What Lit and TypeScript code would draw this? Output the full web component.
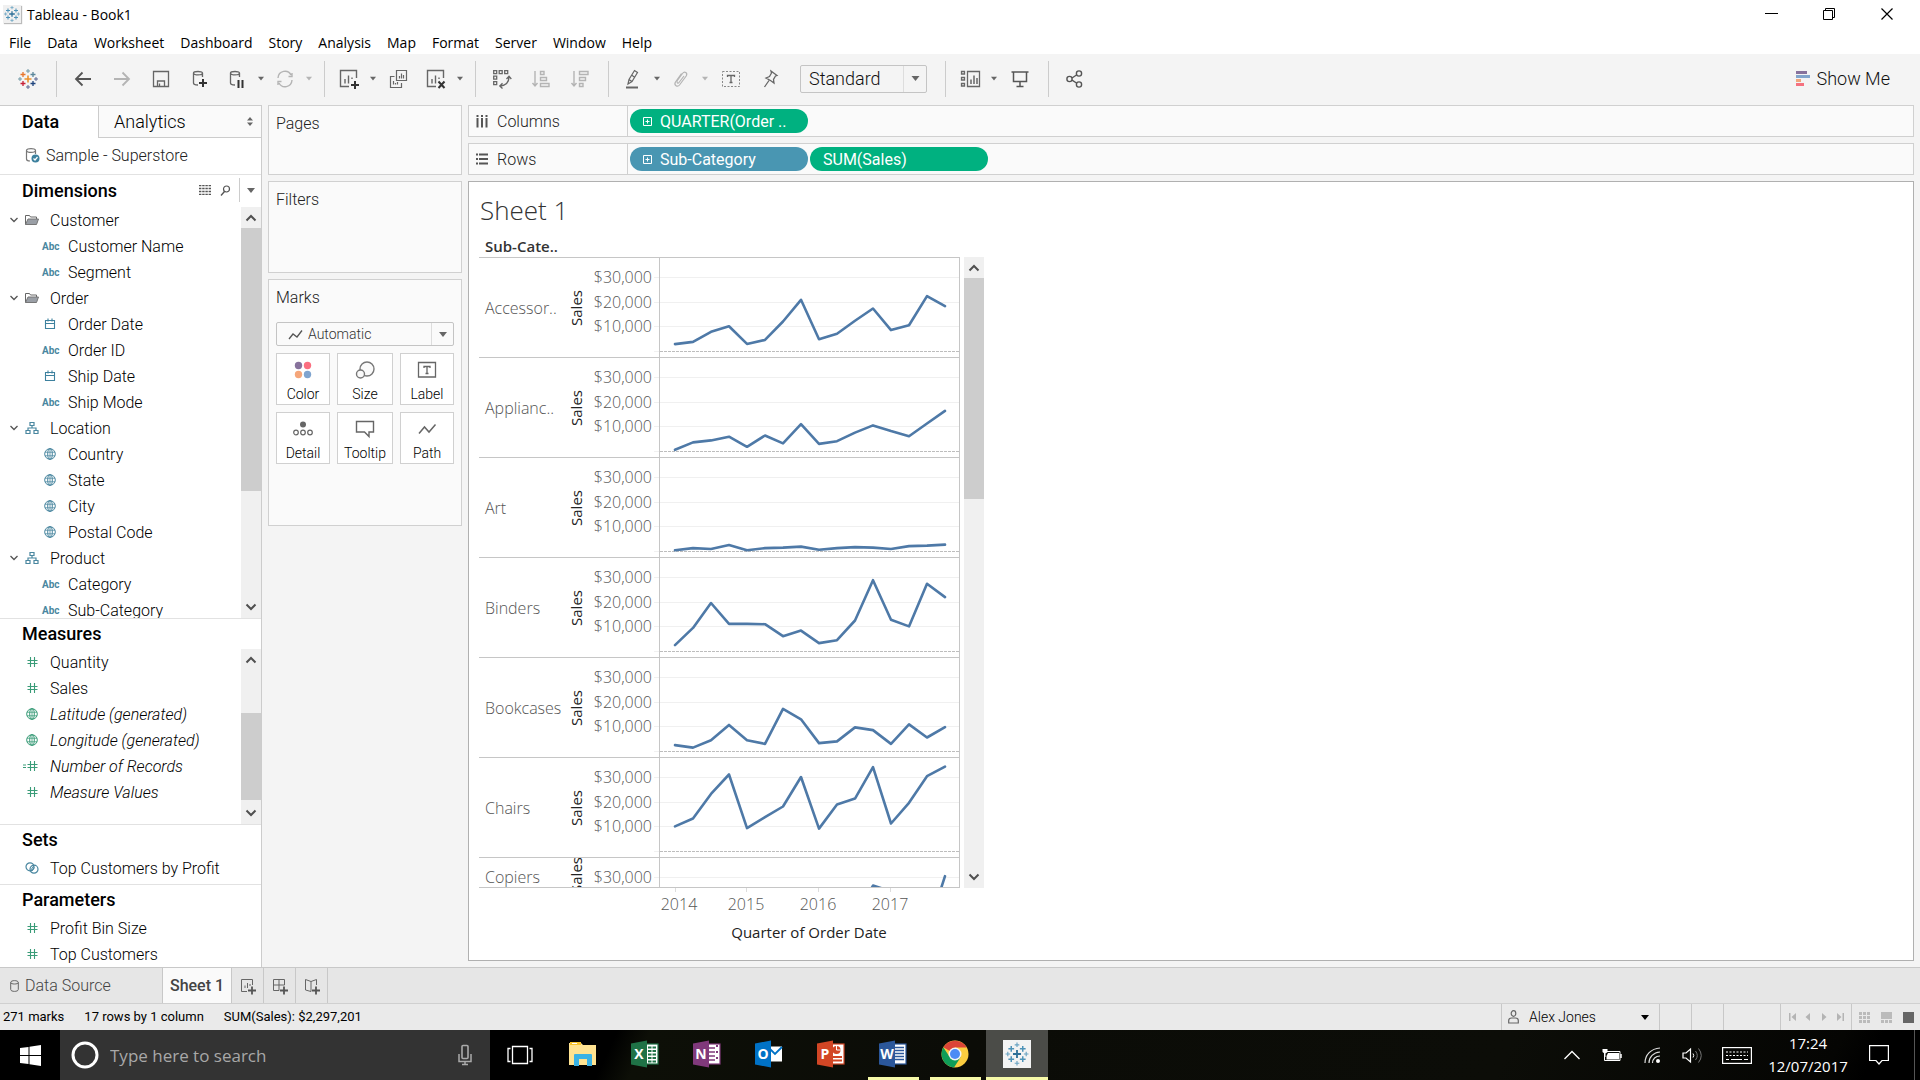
import { LitElement, html, svg, css, nothing, type TemplateResult, type SVGTemplateResult } from "lit";
import { customElement, property } from "lit/decorators.js";
import { classMap } from "lit/directives/class-map.js";
import { styleMap } from "lit/directives/style-map.js";

type Glyph = SVGTemplateResult;

const draw = (glyph: Glyph, w = 20, h = w): TemplateResult =>
  html`<svg class="glyph" width=${w} height=${h} viewBox="0 0 ${w} ${h}" aria-hidden="true">${glyph}</svg>`;

const cross = (x: number, y: number, r: number, color: string, w = 1): Glyph =>
  svg`<path d="M${x - r} ${y}H${x + r}M${x} ${y - r}V${y + r}" stroke=${color} stroke-width=${w} fill="none"/>`;

/* Nine-cross brand mark; colours run centre, diagonals, then outer points. */
const brand = (c: string[]): Glyph => svg`
  ${cross(10, 10, 3.5, c[0], 1.6)}
  ${cross(5, 5.5, 2.5, c[1], 1.3)}${cross(15, 5.5, 2.5, c[2], 1.3)}
  ${cross(5, 14.5, 2.5, c[3], 1.3)}${cross(15, 14.5, 2.5, c[4], 1.3)}
  ${cross(10, 2, 2, c[5])}${cross(2, 10, 2, c[5])}${cross(18, 10, 2, c[6])}${cross(10, 18, 2, c[6])}`;
const BLUE_MARK = ["#2f7098", "#4e93b8", "#4e93b8", "#4e93b8", "#4e93b8", "#6aa3c2", "#6aa3c2"];

const plus = (x: number, y: number): Glyph =>
  svg`<path d="M${x - 4} ${y}H${x + 4}M${x} ${y - 4}V${y + 4}" stroke="#333" stroke-width="2" fill="none"/>`;
const cylinder = svg`<path d="M12.5 8V4C12.5 2 3.5 2 3.5 4V14C3.5 15.3 5 16 8 16M3.5 4C3.5 6.5 12.5 6.5 12.5 4" fill="none" stroke="#666" stroke-width="1.3"/>`;
const sheetBox = svg`<path d="M17.5 9V1.5H1.5V17.5H10M6 14.5V10M9.5 14.5V6.5M13 10V8.5" fill="none" stroke="#666" stroke-width="1.4"/>`;

const icons: Record<string, Glyph> = {
  brand: brand(["#eb912c", "#e8762d", "#5b879b", "#c72037", "#1f447e", "#7199a6", "#5c6692"]),
  back: svg`<path d="M18 10H3M9.5 3.5L3 10L9.5 16.5" fill="none" stroke="#555" stroke-width="1.8"/>`,
  forward: svg`<path d="M2 10H17M10.5 3.5L17 10L10.5 16.5" fill="none" stroke="#b4b4b4" stroke-width="1.8"/>`,
  save: svg`<path d="M2.5 2.5H17.5V17.5H2.5ZM6.5 17V12H13.5V17M8.5 17V14.5" fill="none" stroke="#666" stroke-width="1.3"/>`,
  addData: svg`${cylinder}${plus(13, 14)}`,
  pauseData: svg`${cylinder}<path d="M11.5 11V19M15.5 11V19" stroke="#333" stroke-width="2"/>`,
  refresh: svg`<path d="M3 9C3.5 1.5 13 0 16 6M17 4V7.5H13.5M17 11C16.5 18.5 7 20 4 14M3 16V12.5H6.5" fill="none" stroke="#b4b4b4" stroke-width="1.4"/>`,
  newSheet: svg`${sheetBox}${plus(16, 16)}`,
  copySheet: svg`<path d="M7.5 1.5H17.5V11.5H7.5ZM5.5 7.5H1.5V18.5H12.5V14M10.5 9.5V7M12.5 9.5V4.5M14.5 9.5V6M4.5 15.5V12M6.5 15.5V14M8.5 15.5V13" fill="none" stroke="#666" stroke-width="1.2"/>`,
  clearSheet: svg`${sheetBox}<path d="M12.5 12.5L18.5 19M18.5 12.5L12.5 19" stroke="#333" stroke-width="2"/>`,
  swap: svg`<path d="M1.7 1.7H4.7V4.7H1.7ZM7.2 1.7H10.2V4.7H7.2ZM12.7 1.7H15.7V4.7H12.7ZM1.7 7.2H4.7V10.2H1.7ZM1.7 12.7H4.7V15.7H1.7ZM17 7.5C17 13 14 16.5 8 17M14.5 10L17 7.2L19.3 10M10.5 14.3L7.8 17L10.5 19.5" fill="none" stroke="#666" stroke-width="1.3"/>`,
  sortAsc: svg`<path d="M4 2V17M1.5 14L4 17L6.5 14M9.5 2.5H13V5.5H9.5ZM9.5 8.5H15.5V11.5H9.5ZM9.5 14.5H18V17.5H9.5Z" fill="none" stroke="#b4b4b4" stroke-width="1.4"/>`,
  sortDesc: svg`<path d="M4 2V17M1.5 14L4 17L6.5 14M9.5 2.5H18V5.5H9.5ZM9.5 8.5H15.5V11.5H9.5ZM9.5 14.5H13V17.5H9.5Z" fill="none" stroke="#b4b4b4" stroke-width="1.4"/>`,
  highlight: svg`<path d="M5 15L6 10.5L11.5 1.5L14.5 3.5L9 12.5ZM6 10.5L9 12.5M8.5 6L12 8.5" fill="none" stroke="#666" stroke-width="1.2"/><path d="M3 18.5H15" stroke="#666" stroke-width="2"/>`,
  clip: svg`<path d="M6 12L11.5 4.5C13.5 1.8 17 4 15.2 7L8.5 16C6.5 18.5 2.5 16.3 4.5 13L10.5 4.5M13 7L8 13.5C7 14.8 5.5 13.7 6.3 12.3" fill="none" stroke="#b4b4b4" stroke-width="1.2"/>`,
  label: svg`<rect x="1.5" y="2.5" width="17" height="15" fill="none" stroke="#888" stroke-dasharray="2 1.5"/><path d="M6.5 8V6.5H13.5V8M10 6.5V13.5M8.5 13.5H11.5" fill="none" stroke="#666" stroke-width="1.3"/>`,
  pin: svg`<path d="M11 2L17 6.5L15.5 7L13.5 10.5L14 14L10.5 11.5L6 9L9.5 7.5L11.5 4ZM9 11.5L4.5 18" fill="none" stroke="#666" stroke-width="1.3"/>`,
  cards: svg`<path d="M1.5 2.5H4.5V5H1.5ZM1.5 8.5H4.5V11H1.5ZM1.5 14.5H4.5V17H1.5ZM7.5 2.5H19.5V17.5H7.5Z" fill="none" stroke="#666" stroke-width="1.3"/><path d="M11 15V10.5M14 15V6.5M17 15V9" stroke="#666" stroke-width="1.5"/>`,
  present: svg`<path d="M1.5 3H18.5M3.5 3V12.5H16.5V3M10 12.5V17M6.5 17.5H13.5" fill="none" stroke="#555" stroke-width="1.5"/>`,
  share: svg`<g fill="none" stroke="#555" stroke-width="1.4"><circle cx="4.5" cy="10" r="2.6"/><circle cx="14" cy="4.5" r="2.6"/><circle cx="14" cy="15.5" r="2.6"/><path d="M7 9L11.5 6M7 11.2L11.5 14"/></g>`,
  folder: svg`<path d="M.5 11.5V2.500H4.5L5.500 4H11.5V6" fill="none" stroke="#666"/><path d="M.5 11.5L3 6H13.5L11.5 11.5Z" fill="#9a9fa6" stroke="#777"/>`,
  hierarchy: svg`<path d="M5 1.5H9V4.5H5ZM1 9.5H5V12.5H1ZM9 9.5H13V12.5H9ZM7 4.5V7M3 9.5V7H11V9.5" fill="none" stroke="#4a87a0" stroke-width="1.2"/>`,
  calendar: svg`<path d="M2.5 3.5H11.5V11.5H2.5ZM2.5 6.5H11.5M5 1.5V4.5M9 1.5V4.5" fill="none" stroke="#3d819e" stroke-width="1.1"/>`,
  globe: svg`<g fill="none" stroke="currentColor"><circle cx="7" cy="7" r="5.3"/><ellipse cx="7" cy="7" rx="2.3" ry="5.3"/><path d="M2 5.2H12M2 8.8H12M7 1.5V12.5" stroke-width="0.8"/></g>`,
  hash: svg`<path d="M5.5 2V12M9.5 2V12M2.5 5.5H12.5M2.5 8.5H12.5" stroke="#3a9c78" stroke-width="1.1"/>`,
  sets: svg`<g fill="none" stroke="#4a87a0" stroke-width="1.2"><circle cx="5" cy="5.8" r="4"/><circle cx="9" cy="8.2" r="4"/></g><path d="M5.5 9.5L9 4.5M7 10L9.5 6.5" stroke="#4a87a0"/>`,
};
icons.calcHash = svg`${icons.hash}<path d="M-2 6H1M-2 8.5H1" stroke="#3a9c78"/>`;

const caret = (w = 8, color = "#666") =>
  html`<svg class="caret" width=${w} height="5" viewBox="0 0 8 5" aria-hidden="true"><path d="M0 0H8L4 5Z" fill=${color} /></svg>`;

const reset = css`
  *, *::before, *::after { box-sizing: border-box; }
  button, select, input { font: inherit; color: inherit; border: 0; background: none; padding: 0; margin: 0; border-radius: 0; appearance: none; outline: none; }
  button { display: flex; align-items: center; justify-content: center; white-space: nowrap; }
  ul { list-style: none; margin: 0; padding: 0; }
  h1, h2 { margin: 0; font-size: inherit; font-weight: inherit; }
  svg { display: block; flex: none; }
  .glyph { overflow: visible; }
`;

@customElement("scroll-bar")
class ScrollBar extends LitElement {
  @property({ type: Number }) before = 0;
  @property({ type: Number }) thumb = 1;
  @property({ type: Number }) after = 1;
  static styles = [reset, css`
    :host { display: flex; flex-direction: column; width: 20px; flex: none; background: #f0f0f0; }
    .arrow { height: 21px; flex: none; }
    .arrow.down { height: 23px; }
    .thumb { background: #cdcdcd; }
  `];
  private arrow(name: string, d: string, down = false) {
    return html`<button class=${classMap({ arrow: true, down })} aria-label=${name}>
      <svg width="12" height="8" viewBox="0 0 12 8"><path d=${d} fill="none" stroke="#505050" stroke-width="2" /></svg>
    </button>`;
  }
  render() {
    return html`${this.arrow("Scroll up", "M1.5 6.5L6 2L10.5 6.5")}
      <div style=${styleMap({ flex: `${this.before} 0 0` })}></div>
      <div class="thumb" style=${styleMap({ flex: `${this.thumb} 0 0` })}></div>
      <div style=${styleMap({ flex: `${this.after} 0 0` })}></div>
      ${this.arrow("Scroll down", "M1.5 1.5L6 6L10.5 1.5", true)}`;
  }
}

@customElement("tool-bar")
class ToolBar extends LitElement {
  static styles = [reset, css`
    :host { display: flex; align-items: center; height: 51px; padding-bottom: 2px; box-sizing: border-box; background: #f4f4f4; font-size: 18px; font-weight: 300; color: #111; }
    .tool { width: 39px; height: 34px; }
    .tool.split { width: 36px; }
    .tool.first { width: 56px; }
    .drop { width: 12px; height: 34px; }
    .group { display: flex; align-items: center; height: 36px; padding: 0 9px 0 6px; border-left: 1px solid #ccc; }
    .group.wide { padding-right: 18px; }
    .fit { display: flex; align-items: center; width: 127px; height: 28px; margin-left: 11px; border: 1px solid #c4c4c4; border-radius: 2px; }
    .fit select { flex: 1; min-width: 0; padding-left: 8px; height: 26px; }
    .fit .end { width: 23px; height: 26px; display: grid; place-items: center; border-left: 1px solid #ddd; }
    .show { margin-left: auto; padding-right: 30px; gap: 7px; }
  `];
  private tool(name: string, label: string, split = false, faded = false) {
    return html`<button class=${classMap({ tool: true, split })} aria-label=${label}>${draw(icons[name])}</button>
      ${split ? html`<button class="drop" aria-label="${label} options">${caret(6, faded ? "#b4b4b4" : "#666")}</button>` : nothing}`;
  }
  render() {
    return html`
      <button class="tool first" aria-label="Start page">${draw(icons.brand)}</button>
      <div class="group">
        ${this.tool("back", "Undo")}${this.tool("forward", "Redo")}${this.tool("save", "Save")}
        ${this.tool("addData", "New data source")}${this.tool("pauseData", "Pause updates", true)}
        ${this.tool("refresh", "Run update", true, true)}
      </div>
      <div class="group">
        ${this.tool("newSheet", "New worksheet", true)}${this.tool("copySheet", "Duplicate")}${this.tool("clearSheet", "Clear", true)}
      </div>
      <div class="group">
        ${this.tool("swap", "Swap rows and columns")}${this.tool("sortAsc", "Sort ascending")}${this.tool("sortDesc", "Sort descending")}
      </div>
      <div class="group wide">
        ${this.tool("highlight", "Highlight", true)}${this.tool("clip", "Group members", true, true)}
        ${this.tool("label", "Show mark labels")}${this.tool("pin", "Fix axes")}
        <div class="fit">
          <select aria-label="Fit"><option>Standard</option></select>
          <span class="end">${caret(9)}</span>
        </div>
      </div>
      <div class="group">${this.tool("cards", "Show or hide cards", true)}${this.tool("present", "Presentation mode")}</div>
      <div class="group">${this.tool("share", "Share workbook")}</div>
      <button class="show">
        <svg width="14" height="16" viewBox="0 0 14 16" aria-hidden="true">
          <path d="M0 0H11V3H0Z" fill="#87729c" /><path d="M0 4H14V7H0Z" fill="#82a5cc" />
          <path d="M0 8H5V11H0Z" fill="#f0a67c" /><path d="M0 12H8V15H0Z" fill="#f5717f" />
        </svg>
        Show Me
      </button>`;
  }
}

interface Field { name: string; icon: string; child?: boolean; folder?: boolean; calc?: boolean }
const f = (icon: string, name: string): Field => ({ icon, name, child: true });
const dimensions: Field[] = [
  { icon: "folder", name: "Customer", folder: true }, f("abc", "Customer Name"), f("abc", "Segment"),
  { icon: "folder", name: "Order", folder: true }, f("calendar", "Order Date"), f("abc", "Order ID"), f("calendar", "Ship Date"), f("abc", "Ship Mode"),
  { icon: "hierarchy", name: "Location", folder: true }, f("globe", "Country"), f("globe", "State"), f("globe", "City"), f("globe", "Postal Code"),
  { icon: "hierarchy", name: "Product", folder: true }, f("abc", "Category"), f("abc", "Sub-Category"),
];
const measures: Field[] = [
  { icon: "hash", name: "Quantity" }, { icon: "hash", name: "Sales" },
  { icon: "globe", name: "Latitude (generated)", calc: true }, { icon: "globe", name: "Longitude (generated)", calc: true },
  { icon: "calcHash", name: "Number of Records", calc: true }, { icon: "hash", name: "Measure Values", calc: true },
];

@customElement("data-pane")
class DataPane extends LitElement {
  static styles = [reset, css`
    :host { display: flex; flex-direction: column; width: 262px; min-height: 0; box-sizing: border-box; background: #fff; border-right: 1px solid #ccc; border-top: 1px solid #ccc; font-size: 16px; font-weight: 300; color: #000; }
    .tabs { display: flex; height: 32px; flex: none; font-size: 18px; }
    .tab { justify-content: flex-start; }
    .tab.on { width: 98px; padding: 0 0 2px 22px; font-weight: 500; }
    .tab.off { flex: 1; padding: 0 8px 0 15px; justify-content: space-between; background: #fafafa; border-left: 1px solid #ccc; border-bottom: 1px solid #ccc; }
    .source { display: flex; align-items: center; gap: 6px; height: 37px; flex: none; padding: 0 0 2px 25px; color: #222; border-bottom: 1px solid #e2e2e2; }
    .head { display: flex; align-items: center; height: 32px; flex: none; padding: 0 0 2px 22px; }
    .head h2 { flex: 1; font-size: 18px; font-weight: 500; }
    .head.low { height: 30px; }
    .head .tool { width: 20px; height: 24px; }
    .head .more { width: 22px; height: 24px; margin-left: 4px; border-left: 1px solid #ccc; }
    .list { display: flex; min-height: 0; border-bottom: 1px solid #e2e2e2; }
    .list.grow { flex: 1; }
    .list.mid { flex: 0 0 176px; }
    .list.short { flex: none; padding-bottom: 3px; }
    .list:last-child { border-bottom: 0; }
    ul { flex: 1; min-width: 0; overflow: hidden; }
    .field { display: flex; align-items: center; height: 26px; padding-left: 24px; white-space: nowrap; color: #3a9c78; }
    .field.folder { padding-left: 9px; }
    .field.child { padding-left: 42px; color: #4a87a0; }
    .twist { width: 10px; margin-right: 5px; }
    .kind { width: 16px; display: grid; place-items: center; margin-right: 10px; }
    .abc { font-size: 10px; font-weight: 700; }
    .name { color: #000; }
    .calc .name { font-style: italic; }
  `];
  private field(x: Field) {
    return html`<li class=${classMap({ field: true, folder: !!x.folder, child: !!x.child, calc: !!x.calc })}>
      ${x.folder ? html`<svg class="twist" width="10" height="6" viewBox="0 0 10 6"><path d="M1.5 1L5 4.500L8.5 1" fill="none" stroke="#555" stroke-width="1.3" /></svg>` : nothing}
      <span class="kind">${x.icon === "abc" ? html`<span class="abc">Abc</span>` : draw(icons[x.icon], 14)}</span>
      <span class="name">${x.name}</span>
    </li>`;
  }
  render() {
    return html`
      <div class="tabs" role="tablist">
        <button class="tab on" role="tab" aria-selected="true">Data</button>
        <button class="tab off" role="tab" aria-selected="false">Analytics
          <svg width="6" height="9" viewBox="0 0 6 9"><path d="M0 3.5L3 0L6 3.5ZM0 5.5L3 9L6 5.5Z" fill="#666" /></svg>
        </button>
      </div>
      <div class="source">
        <svg width="15" height="16" viewBox="0 0 15 16"><path d="M10.5 7V3.5C10.5 1 1.5 1 1.5 3.5V12C1.5 13.5 3 14 5 14M1.5 3.5C1.5 6 10.5 6 10.5 3.5" fill="none" stroke="#777" stroke-width="1.2" /><circle cx="10.5" cy="11.5" r="4" fill="#3d819e" /><path d="M8.5 11.5L10 13L12.5 10" fill="none" stroke="#fff" stroke-width="1.2" /></svg>
        Sample - Superstore
      </div>
      <div class="head">
        <h2>Dimensions</h2>
        <button class="tool" aria-label="View data"><svg width="12" height="10" viewBox="0 0 12 10"><path d="M0 .5H12M0 3.5H12M0 6.5H12M0 9.5H12" stroke="#555" stroke-width="1.400" stroke-dasharray="2.400 .8" /></svg></button>
        <button class="tool" aria-label="Find field"><svg width="11" height="11" viewBox="0 0 11 11"><circle cx="6.5" cy="4" r="3" fill="none" stroke="#555" stroke-width="1.2" /><path d="M4.5 6.5L1 10.5" stroke="#555" stroke-width="1.3" /></svg></button>
        <button class="more" aria-label="Pane options">${caret()}</button>
      </div>
      <div class="list grow"><ul>${dimensions.map((x) => this.field(x))}</ul><scroll-bar .before=${0} .thumb=${262} .after=${104}></scroll-bar></div>
      <div class="head low"><h2>Measures</h2></div>
      <div class="list mid"><ul>${measures.map((x) => this.field(x))}</ul><scroll-bar .before=${44} .thumb=${88} .after=${1}></scroll-bar></div>
      <div class="head low"><h2>Sets</h2></div>
      <div class="list short"><ul>${this.field({ icon: "sets", name: "Top Customers by Profit" })}</ul></div>
      <div class="head low"><h2>Parameters</h2></div>
      <div class="list"><ul>${this.field({ icon: "hash", name: "Profit Bin Size" })}${this.field({ icon: "hash", name: "Top Customers" })}</ul></div>`;
  }
}

const markCards: [string, Glyph][] = [
  ["Color", svg`<circle cx="4.5" cy="4.5" r="3.7" fill="#87729c"/><circle cx="13.5" cy="4.5" r="3.7" fill="#fb6f80"/><circle cx="4.5" cy="13.5" r="3.7" fill="#f5a67a"/><circle cx="13.5" cy="13.5" r="3.7" fill="#7fa4cf"/>`],
  ["Size", svg`<g fill="#fafafa" stroke="#777" stroke-width="1.4"><circle cx="11" cy="8" r="7"/><circle cx="4.5" cy="13" r="4"/></g>`],
  ["Label", svg`<path d="M0.5 1.5H17.5V16H0.5ZM6 7V5.5H12V7M9 5.5V12.5M7.5 12.5H10.5" fill="none" stroke="#666" stroke-width="1.3"/>`],
  ["Detail", svg`<circle cx="9" cy="4.5" r="3" fill="#666"/><g fill="none" stroke="#666" stroke-width="1.2"><circle cx="2" cy="12.5" r="2.3"/><circle cx="9" cy="12.5" r="2.3"/><circle cx="16" cy="12.5" r="2.3"/></g>`],
  ["Tooltip", svg`<path d="M0.5 1.5H17.5V12H13V16.5L8.5 12H0.5Z" fill="none" stroke="#666" stroke-width="1.4"/>`],
  ["Path", svg`<path d="M1 13.5L6.5 7L11 12L17.5 4.5" fill="none" stroke="#666" stroke-width="1.5"/>`],
];

@customElement("card-stack")
class CardStack extends LitElement {
  static styles = [reset, css`
    :host { display: flex; flex-direction: column; gap: 6px; width: 194px; color: #222; font-size: 16px; font-weight: 300; }
    .card { background: #fafafa; border: 1px solid #d0d0d0; padding: 8px 7px; }
    .card h2 { line-height: 20px; }
    .pages { height: 70px; }
    .filters { height: 92px; }
    .marks { height: 247px; }
    .type { display: flex; align-items: center; height: 24px; margin: 14px 0 7px; padding-left: 11px; border: 1px solid #c4c4c4; border-radius: 2px; font-size: 14px; color: #333; }
    .type select { flex: 1; min-width: 0; padding-left: 5px; }
    .type .end { width: 22px; height: 22px; display: grid; place-items: center; border-left: 1px solid #ddd; }
    .grid { display: grid; grid-template-columns: 54px 56px 54px; justify-content: space-between; gap: 7px; }
    .mark { flex-direction: column; justify-content: space-between; height: 52px; padding: 7px 0 1px; border: 1px solid #d0d0d0; background: #fff; color: #000; font-size: 14px; line-height: 18px; }
  `];
  render() {
    return html`
      <section class="card pages"><h2>Pages</h2></section>
      <section class="card filters"><h2>Filters</h2></section>
      <section class="card marks">
        <h2>Marks</h2>
        <div class="type">
          ${draw(svg`<path d="M1 10L5 5L9 8L14 1.5" fill="none" stroke="#555" stroke-width="1.3"/>`, 15, 11)}
          <select aria-label="Mark type"><option>Automatic</option></select>
          <span class="end">${caret()}</span>
        </div>
        <div class="grid">${markCards.map(([name, glyph]) => html`<button class="mark">${draw(glyph, 18)}${name}</button>`)}</div>
      </section>`;
  }
}

/* Quarterly sales in thousands, 2014 Q1 to 2017 Q4. */
const series: { name: string; values: number[]; cut?: boolean }[] = [
  { name: "Accessor..", values: [3, 3.9, 8, 10.3, 3.1, 4.7, 12.2, 21, 5, 7.2, 12.5, 17.5, 8.7, 10.7, 22.5, 18.4] },
  { name: "Applianc..", values: [0.7, 3.7, 4.5, 6, 1.9, 6.5, 3.3, 11.1, 3.1, 4.2, 7.7, 10.6, 8.3, 6.2, 11.4, 16.5] },
  { name: "Art", values: [0.5, 1.4, 1, 2.6, 0.5, 1.4, 1.6, 2, 0.7, 1.4, 1.8, 1.6, 1, 2.2, 2.4, 2.8] },
  { name: "Binders", values: [2.6, 9.6, 19.7, 11.2, 11.2, 11.1, 6.2, 8.5, 3.4, 4.6, 12.6, 29, 12.9, 10.2, 27.5, 22.1] },
  { name: "Bookcases", values: [2.6, 1.6, 4.6, 10.8, 4.6, 3.1, 17.3, 13.1, 3.4, 4.1, 9.8, 8.7, 3.1, 11, 5.7, 9.9] },
  { name: "Chairs", values: [10.2, 13.4, 23.4, 31.3, 9.5, 14, 18.3, 30.3, 9.3, 19.1, 21.5, 34.3, 11.4, 19.8, 30.6, 34.5] },
  { name: "Copiers", values: [2, 3, 5, 6, 2, 4, 8, 10, 3, 6, 14, 26.8, 24.5, 9, 8, 30.6], cut: true },
];

@customElement("sheet-view")
class SheetView extends LitElement {
  static styles = [reset, css`
    :host { display: block; box-sizing: border-box; background: #fff; border: 1px solid #b0b0b0; padding: 13px 10px 0; color: #555; font: 300 16px "Open Sans", sans-serif; }
    h1 { padding-left: 1px; font-size: 26px; line-height: 30px; color: #333; }
    .field { padding: 10px 0 0 6px; line-height: 22px; font-weight: 600; font-size: 15px; color: #333; }
    .view { display: flex; gap: 4px; }
    .rows { width: 481px; border-bottom: 1px solid #c6c6c6; }
    .row { display: flex; align-items: center; height: 100px; border-top: 1px solid #c6c6c6; }
    .row.cut { height: 30px; }
    .name { width: 86px; padding-left: 6px; }
    .cut .name { padding-top: 9px; }
    .plot { overflow: hidden; }
    .tick { font-size: 16px; fill: #555; text-anchor: end; }
    .axis { font-size: 15px; font-weight: 400; fill: #222; text-anchor: middle; }
    .years { overflow: visible; }
    .year { font-size: 16px; fill: #555; text-anchor: middle; }
    .title { font-size: 15px; font-weight: 500; fill: #222; text-anchor: middle; }
  `];
  private row(s: (typeof series)[number]) {
    const h = s.cut ? 29 : 99;
    const y = (v: number) => 93.5 - v * 2.46;
    const mid = s.cut ? 17 : 50;
    const ticks = [[30, 19], [20, 44], [10, 68]].filter(([, at]) => at < h);
    const pts = s.values.map((v, i) => `${110 + i * 18},${y(v).toFixed(1)}`).join(" ");
    return html`<div class=${classMap({ row: true, cut: !!s.cut })}>
      <span class="name">${s.name}</span>
      <svg class="plot" width="395" height=${h} viewBox="0 0 395 ${h}" role="img" aria-label="${s.name} sales by quarter">
        <text class="axis" x="17" y=${mid} transform="rotate(-90 17 ${mid})">Sales</text>
        ${ticks.map(([v, at]) => svg`
          <text class="tick" x="87" y=${at + 6}>$${v},000</text>
          <path d="M89 ${at + 0.5}H394" stroke="#f0f0f0"/>`)}
        <path d="M89 93.5H94" stroke="#f0f0f0" />
        <path d="M95 93.5H394" stroke="#bdbdbd" stroke-dasharray="3 1" />
        <path d="M94.5 0V99M394.5 0V99" stroke="#c6c6c6" />
        <polyline points=${pts} fill="none" stroke="#4e79a7" stroke-width="2.6" stroke-linejoin="round" stroke-linecap="round" />
      </svg>
    </div>`;
  }
  render() {
    return html`
      <h1>Sheet 1</h1>
      <div class="field">Sub-Cate..</div>
      <div class="view">
        <div class="rows">${series.map((s) => this.row(s))}</div>
        <scroll-bar .before=${0} .thumb=${221} .after=${366}></scroll-bar>
      </div>
      <svg class="years" width="481" height="60" viewBox="0 0 481 60" role="img" aria-label="Quarter axis">
        ${[["2014", 196, 200], ["2015", 267, 267], ["2016", 339, 339], ["2017", 411, 411]].map(([t, tick, x]) => svg`
          <path d="M${tick}.5 0V4" stroke="#ddd"/><text class="year" x=${x} y="22">${t}</text>`)}
        <text class="title" x="330" y="50">Quarter of Order Date</text>
      </svg>`;
  }
}

const officeTile = (letter: string, color: string, detail: Glyph): TemplateResult => html`
  <svg width="28" height="28" viewBox="0 0 28 28" aria-hidden="true">
    <rect x="14" y="4" width="13" height="20" fill="#fff" stroke=${color} stroke-width="1.2" />
    ${detail}
    <path d="M0 3.5L16 0.5V27.5L0 24.5Z" fill=${color} />
    <text x="8" y="19" text-anchor="middle" font-family="Open Sans, sans-serif" font-weight="700" font-size="14" fill="#fff">${letter}</text>
  </svg>`;

const apps: { name: string; art: TemplateResult; open?: boolean; active?: boolean }[] = [
  { name: "File Explorer", art: html`<svg width="28" height="26" viewBox="0 0 28 26"><path d="M0 2H12L14 4H27V24H0Z" fill="#ffe391" /><path d="M1 1H12V4H1Z" fill="#f7c32e" /><path d="M3 2H8V3H3Z" fill="#fff" /><path d="M5 25V14Q5 13 6 13H22Q23 13 23 14V25H18V18H10V25Z" fill="#3ab3e6" /></svg>` },
  { name: "Excel", art: officeTile("X", "#1f7246", svg`<path d="M17 7.5H25M17 11H25M17 14.5H25M17 18H25M17 21.5H25" stroke="#1f7246" stroke-width="2" stroke-dasharray="3.5 1"/>`) },
  { name: "OneNote", art: officeTile("N", "#80397b", svg`<path d="M16 8H22M16 12H22M16 16H22M16 20H22" stroke="#80397b" stroke-width="1.5"/><path d="M24 5V23" stroke="#80397b" stroke-width="2" stroke-dasharray="2 4"/>`) },
  { name: "Outlook", art: html`<svg width="28" height="28" viewBox="0 0 28 28"><rect x="13" y="6.5" width="14" height="15" fill="#fff" /><path d="M15 9L20 14L27 7" fill="none" stroke="#0072c6" stroke-width="1.8" /><path d="M0 3.5L16 0.5V27.5L0 24.5Z" fill="#0072c6" /><text x="8" y="19" text-anchor="middle" font-family="Open Sans, sans-serif" font-weight="700" font-size="14" fill="#fff">O</text></svg>` },
  { name: "PowerPoint", art: officeTile("P", "#d24625", svg`<circle cx="19.5" cy="10" r="4" fill="#d24625"/><path d="M19.5 10V6M19.5 10H23.5" stroke="#fff"/><path d="M16 17H25M16 20.5H25" stroke="#d24625" stroke-width="1.8"/>`) },
  { name: "Word", open: true, art: officeTile("W", "#2b579a", svg`<path d="M16 7.5H25M16 10.5H25M16 13.5H25M16 16.5H25M16 19.5H25" stroke="#2b579a" stroke-width="1.4"/>`) },
  { name: "Chrome", open: true, art: html`<svg width="28" height="28" viewBox="0 0 28 28"><circle cx="14" cy="14" r="13.5" fill="#fbcd3f" /><path d="M14 14L2.3 7.3A13.5 13.5 0 0 1 25.7 7.5H14Z" fill="#db4437" /><path d="M2.3 7.3A13.5 13.5 0 0 0 13 27.5L19.5 17.5L14 14L8 16Z" fill="#0f9d58" /><circle cx="14" cy="14" r="6.5" fill="#f4f4f4" /><circle cx="14" cy="14" r="5" fill="#4c8bf5" /></svg>` },
  { name: "Tableau", open: true, active: true, art: html`<svg width="28" height="28" viewBox="0 0 28 28"><rect width="28" height="28" fill="#f3f3f3" /><g transform="translate(2.5 2.5) scale(1.15)">${brand(BLUE_MARK)}</g></svg>` },
];

@customElement("task-bar")
class TaskBar extends LitElement {
  static styles = [reset, css`
    :host { display: flex; height: 50px; flex: none; color: #fff; font: 15px "Open Sans", sans-serif; background: linear-gradient(115deg, #000 0 560px, #0d0f07 590px, #0b0c07 50%, #0c0d08 78%, #050503 95%, #000 97%); }
    .start { width: 60px; }
    .search { display: flex; align-items: center; width: 430px; padding: 0 16px 0 11px; background: #333; }
    .search input { flex: 1; min-width: 0; padding-left: 11px; font-size: 17px; }
    .search input::placeholder { color: #a8a8a8; opacity: 1; }
    .view { width: 60px; margin-right: 2px; }
    .apps { display: flex; }
    .app { position: relative; width: 62px; padding: 0 5px 3px; }
    .app.open::after { content: ""; position: absolute; left: 6px; right: 5px; bottom: 0; height: 3px; background: #f6f9a8; }
    .app.active { background: #4b4c48; }
    .app.active::after { left: 0; right: 0; }
    .tray { display: flex; align-items: center; margin-left: auto; border-right: 1px solid #555; margin-right: 5px; padding-right: 10px; }
    .tray button { height: 50px; width: 40px; }
    .tray .board { width: 50px; }
    .tray .note { width: 50px; }
    .clock { width: 92px; text-align: center; line-height: 23px; }
  `];
  render() {
    return html`
      <button class="start" aria-label="Start"><svg width="21" height="21" viewBox="0 0 21 21"><path d="M0 3L8.5 2V10H0ZM9.5 1.8L21 0V10H9.5ZM0 11H8.5V19L0 18ZM9.5 11H21V21L9.5 19.2Z" fill="#fff" /></svg></button>
      <label class="search">
        <svg width="28" height="28" viewBox="0 0 28 28"><circle cx="14" cy="14" r="12" fill="none" stroke="#fff" stroke-width="3" /></svg>
        <input type="text" aria-label="Search" placeholder="Type here to search" />
        <svg width="18" height="22" viewBox="0 0 18 22"><rect x="6" y="1.5" width="6" height="13" rx="1" fill="none" stroke="#aaa" stroke-width="1.6" /><path d="M3 10V17.5H15V10M9 17.5V20M6 20.5H12" fill="none" stroke="#aaa" stroke-width="1.5" /></svg>
      </label>
      <button class="view" aria-label="Task view"><svg width="26" height="20" viewBox="0 0 26 20"><path d="M5.5 1.5H20.5V18.5H5.5ZM3.5 3.5H1V16.5H3.5M22.5 3.5H25V16.5H22.5" fill="none" stroke="#fff" stroke-width="1.3" /></svg></button>
      <div class="apps">
        ${apps.map((a) => html`<button class=${classMap({ app: true, open: !!a.open, active: !!a.active })} aria-label=${a.name}>${a.art}</button>`)}
      </div>
      <div class="tray">
        <button aria-label="Hidden icons"><svg width="16" height="10" viewBox="0 0 16 10"><path d="M0.5 9L8 1.5L15.5 9" fill="none" stroke="#fff" stroke-width="1.3" /></svg></button>
        <button aria-label="Battery"><svg width="20" height="14" viewBox="0 0 20 14"><path d="M2.5 3.5H18V12.5H2.5Z" fill="none" stroke="#fff" /><path d="M6 5H17V11.5H4.5V8Z" fill="#fff" /><path d="M19 6V10" stroke="#fff" stroke-width="1.5" /><path d="M0.5 1H5.5V4L3 6L0.5 4Z" fill="#fff" /><path d="M3 6V9" stroke="#fff" /></svg></button>
        <button aria-label="Network"><svg width="17" height="17" viewBox="0 0 17 17"><g fill="none" stroke="#ddd" stroke-width="1.2"><path d="M1 16C1 8 7 1.5 16 1" /><path d="M5 16C5 10 9.5 5.5 16 5" /><path d="M8.5 16C8.5 12 11.5 9 16 9" /></g><circle cx="14" cy="14" r="2" fill="#fff" /></svg></button>
        <button aria-label="Volume"><svg width="21" height="17" viewBox="0 0 21 17"><path d="M1 6H4L8.5 2V15L4 11H1Z" fill="none" stroke="#fff" stroke-width="1.2" /><path d="M11 6.5Q12.5 8.5 11 10.5" fill="none" stroke="#fff" /><path d="M13.5 4Q17 8.5 13.5 13M16.5 1.5Q22 8.5 16.5 15.5" fill="none" stroke="#777" /></svg></button>
        <button class="board" aria-label="Touch keyboard"><svg width="30" height="17" viewBox="0 0 30 17"><rect x="0.6" y="0.6" width="28.8" height="15.8" fill="none" stroke="#fff" stroke-width="1.2" /><path d="M4 5H26M4 8.5H26" stroke="#fff" stroke-width="1.2" stroke-dasharray="2 1.5" /><path d="M4 12.5H7M9 12.5H20M22 12.5H26" stroke="#fff" stroke-width="1.2" /></svg></button>
        <div class="clock">17:24<br />12/07/2017</div>
        <button class="note" aria-label="Notifications"><svg width="20" height="20" viewBox="0 0 20 20"><path d="M0.6 0.6H19.4V15.5H13L10 19L7 15.5H0.6Z" fill="none" stroke="#fff" stroke-width="1.2" /></svg></button>
      </div>`;
  }
}

const expand = html`<svg width="9" height="9" viewBox="0 0 9 9" aria-hidden="true"><path d="M.5 .5H8.5V8.5H.5ZM2.5 4.5H6.5M4.5 2.5V6.5" fill="none" stroke="#fff" /></svg>`;
const tinyPlus = svg`<path d="M8 12.5H16M12 8.5V16.5" stroke="#555" stroke-width="1.8"/>`;

@customElement("app-root")
class AppRoot extends LitElement {
  static styles = [reset, css`
    :host { display: flex; flex-direction: column; height: 100vh; min-height: 700px; overflow: hidden; background: #f4f4f4; font-family: Roboto, sans-serif; color: #000; }
    .title { display: flex; align-items: center; height: 30px; flex: none; padding: 0 4px 2px 3px; gap: 6px; background: #fff; font: 14px "Open Sans", sans-serif; }
    .badge { width: 18px; height: 18px; display: grid; place-items: center; background: #f0f0f0; box-shadow: 1px 1px 1px #bbb; }
    .window { display: flex; margin-left: auto; }
    .window button { width: 58px; height: 28px; }
    .menu { display: flex; align-items: center; height: 24px; flex: none; padding: 0 9px; gap: 16px; background: #fff; font: 14px "Open Sans", sans-serif; }
    tool-bar { flex: none; }
    .body { flex: 1; min-height: 0; display: flex; gap: 6px; }
    .work { flex: 1; min-width: 0; display: flex; flex-direction: column; gap: 6px; padding: 0 6px 6px 0; }
    .shelf { display: flex; height: 32px; flex: none; background: #fafafa; border: 1px solid #d0d0d0; font-size: 16px; font-weight: 300; color: #222; }
    .shelf h2 { display: flex; align-items: center; gap: 9px; width: 159px; padding-left: 7px; border-right: 1px solid #d0d0d0; }
    .pills { display: flex; align-items: center; gap: 2px; padding-left: 2px; }
    .pill { width: 178px; height: 24px; padding-left: 13px; gap: 8px; justify-content: flex-start; border-radius: 12px; background: #00b180; color: #fff; font-weight: 400; }
    .pill.blue { background: #4996b2; }
    sheet-view { flex: 1; min-height: 0; overflow: hidden; }
    .tabs { display: flex; height: 37px; flex: none; background: #e6e6e6; border-top: 1px solid #c8c8c8; border-bottom: 1px solid #d0d0d0; font-size: 16px; color: #444; }
    .tabs button { border-right: 1px solid #c8c8c8; width: 32px; }
    .tabs .source { width: 163px; justify-content: flex-start; padding-left: 10px; gap: 6px; font-weight: 300; }
    .tabs .sheet { width: 69px; background: #fafafa; font-weight: 500; }
    .status { display: flex; height: 26px; flex: none; align-items: stretch; background: #eaeaea; font-size: 14px; font-weight: 300; line-height: 26px; }
    .facts { display: flex; gap: 20px; padding-left: 3px; flex: 1; font-size: 13px; font-weight: 400; }
    .cell { border-left: 1px solid #c8c8c8; display: flex; align-items: center; justify-content: center; }
    .user { width: 158px; padding: 0 10px 0 6px; gap: 10px; }
    .user select { flex: 1; min-width: 0; }
    .blank { width: 32px; }
    .blank.wide { width: 57px; }
    .nav { width: 71px; gap: 10px; }
    .nav button { width: 6px; }
    .modes { width: 69px; gap: 11px; }
  `];
  render() {
    const menus = ["File", "Data", "Worksheet", "Dashboard", "Story", "Analysis", "Map", "Format", "Server", "Window", "Help"];
    const nav: [string, string][] = [
      ["First sheet", "M0 0H1.5V8H0ZM7 0V8L2.5 4Z"], ["Previous sheet", "M5 0V8L.5 4Z"],
      ["Next sheet", "M1 0V8L5.5 4Z"], ["Last sheet", "M0 0V8L4.5 4ZM5.5 0H7V8H5.5Z"],
    ];
    return html`
      <header class="title">
        <span class="badge"><svg width="16" height="16" viewBox="0 0 20 20">${brand(BLUE_MARK)}</svg></span>Tableau - Book1
        <div class="window">
          <button aria-label="Minimize"><svg width="13" height="12" viewBox="0 0 13 12"><path d="M0 5.5H13" stroke="#000" /></svg></button>
          <button aria-label="Restore"><svg width="12" height="12" viewBox="0 0 12 12"><path d="M.5 2.5H9.5V11.5H.5ZM2.5 2.5V.5H11.5V9.5H9.5" fill="none" stroke="#000" /></svg></button>
          <button aria-label="Close"><svg width="12" height="12" viewBox="0 0 12 12"><path d="M.5 .5L11.5 11.5M11.5 .5L.5 11.5" stroke="#000" stroke-width="1.2" /></svg></button>
        </div>
      </header>
      <nav class="menu">${menus.map((m) => html`<button>${m}</button>`)}</nav>
      <tool-bar></tool-bar>
      <main class="body">
        <data-pane></data-pane>
        <card-stack></card-stack>
        <div class="work">
          <section class="shelf">
            <h2><svg width="12" height="13" viewBox="0 0 12 13"><path d="M1.5 0V12.5M6 0V12.5M10.5 0V12.5" stroke="#555" stroke-width="2" stroke-dasharray="2 1 12" /></svg>Columns</h2>
            <div class="pills"><button class="pill">${expand}QUARTER(Order ..</button></div>
          </section>
          <section class="shelf">
            <h2><svg width="12" height="12" viewBox="0 0 12 12"><path d="M0 1.5H12M0 6H12M0 10.5H12" stroke="#555" stroke-width="2" stroke-dasharray="2 1 12" /></svg>Rows</h2>
            <div class="pills"><button class="pill blue">${expand}Sub-Category</button><button class="pill">SUM(Sales)</button></div>
          </section>
          <sheet-view></sheet-view>
        </div>
      </main>
      <div class="tabs" role="tablist">
        <button class="source" role="tab"><svg width="9" height="12" viewBox="0 0 9 12"><path d="M.7 2.5C.7 0 8.3 0 8.3 2.5V9.5C8.3 12 .7 12 .7 9.5ZM.7 2.5C.7 4.5 8.3 4.5 8.3 2.5" fill="none" stroke="#666" /></svg>Data Source</button>
        <button class="sheet" role="tab" aria-selected="true">Sheet 1</button>
        <button aria-label="New worksheet">${draw(svg`<path d="M12.5 7V1.5H1.5V13.5H7M5 10V7.5M7.5 10V5M10 8V6" fill="none" stroke="#666"/>${tinyPlus}`, 16)}</button>
        <button aria-label="New dashboard">${draw(svg`<path d="M12.5 7V1.5H1.5V12.5H7M1.5 7H12.5M7 1.5V12.5" fill="none" stroke="#666"/>${tinyPlus}`, 16)}</button>
        <button aria-label="New story">${draw(svg`<path d="M12.5 7V1.5L7 3.5L1.5 1.5V12L7 13.5V3.5" fill="none" stroke="#666"/>${tinyPlus}`, 16)}</button>
      </div>
      <footer class="status">
        <div class="facts"><span>271 marks</span><span>17 rows by 1 column</span><span>SUM(Sales): $2,297,201</span></div>
        <label class="cell user">
          <svg width="11" height="14" viewBox="0 0 11 14"><ellipse cx="5.5" cy="3.5" rx="2.3" ry="2.8" fill="none" stroke="#666" stroke-width="1.2" /><path d="M.7 13V10.5Q.7 8 3.5 8H7.5Q10.3 8 10.3 10.5V13Z" fill="none" stroke="#666" stroke-width="1.2" /></svg>
          <select aria-label="User"><option>Alex Jones</option></select>${caret(8, "#000")}
        </label>
        <div class="cell blank"></div><div class="cell blank"></div><div class="cell blank wide"></div>
        <div class="cell nav">${nav.map(([label, d]) => html`<button aria-label=${label}><svg width="7" height="8" viewBox="0 0 7 8"><path d=${d} fill="#b4b4b4" /></svg></button>`)}</div>
        <div class="cell modes">
          <svg width="11" height="11" viewBox="0 0 11 11"><path d="M0 1.5H11M0 5.5H11M0 9.5H11" stroke="#bbb" stroke-width="3" stroke-dasharray="3 1" /></svg>
          <svg width="11" height="11" viewBox="0 0 11 11"><path d="M0 3.5H11" stroke="#bbb" stroke-width="7" /><path d="M0 9.5H11" stroke="#bbb" stroke-width="3" stroke-dasharray="3 1" /></svg>
          <svg width="11" height="11" viewBox="0 0 11 11"><path d="M0 0H11V11H0Z" fill="#666" /></svg>
        </div>
      </footer>
      <task-bar></task-bar>`;
  }
}
